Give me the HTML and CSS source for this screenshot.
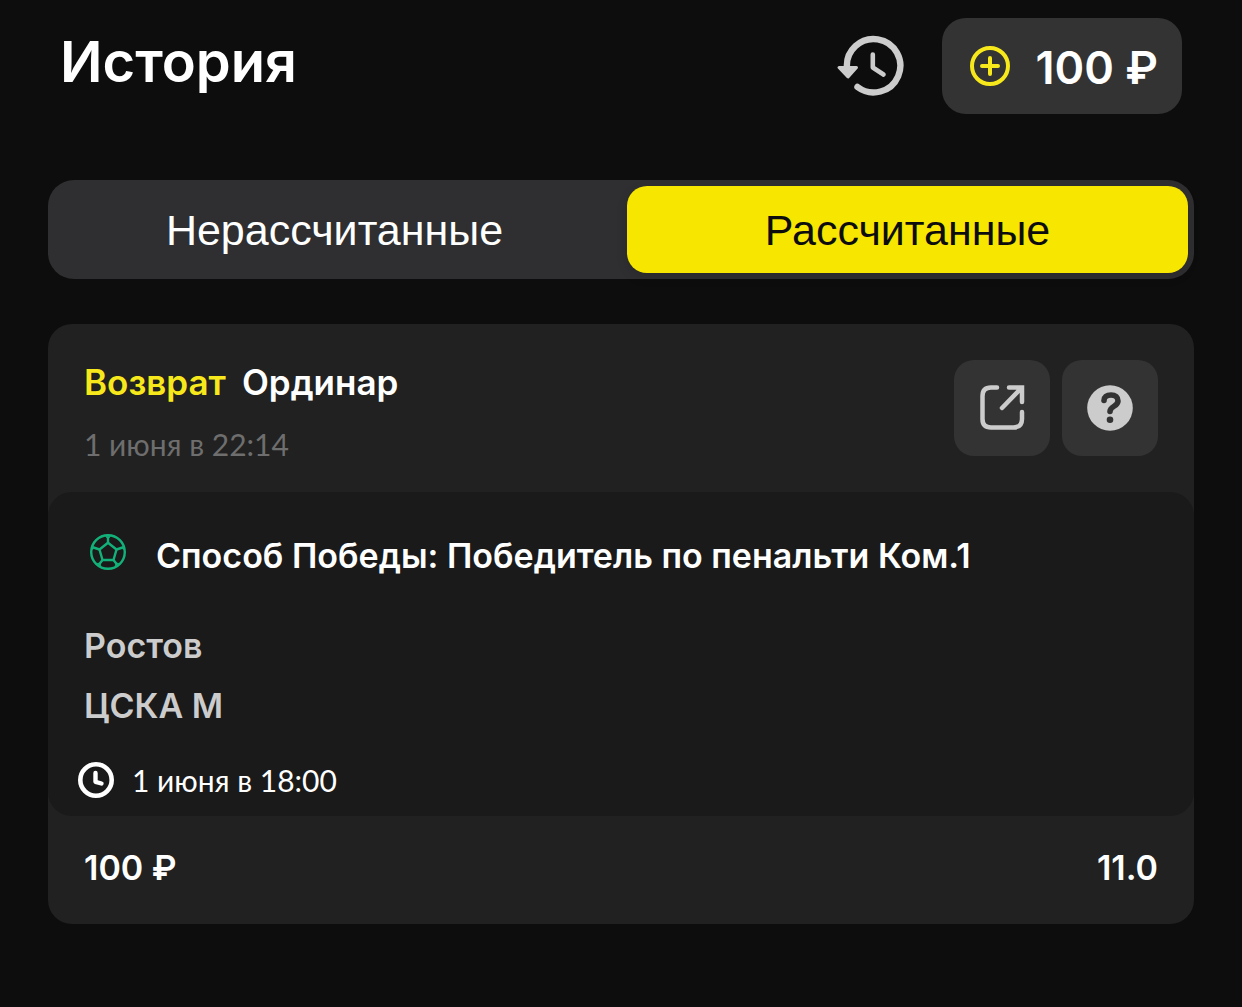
FILE: index.html
```html
<!DOCTYPE html>
<html lang="ru">
<head>
<meta charset="utf-8">
<meta name="viewport" content="width=device-width, initial-scale=1">
<title>История</title>
<link rel="stylesheet" href="styles.css">
</head>
<body>
<header class="topbar">
  <h1 class="title">История</h1>
  <button class="history" type="button" aria-label="История операций">
    <svg width="68" height="64" viewBox="0 0 68 64" fill="none" stroke="#ccc" stroke-linecap="round" stroke-linejoin="round">
      <path d="M11 34A26.700 26.700 0 1 1 21.500 53" stroke-width="6.400"/>
      <path d="M3 33.500H20.500L12 43Z" fill="#ccc" stroke-width="3"/>
      <path d="M36.800 20.500V33.500L47.500 40.500" stroke-width="4.600"/>
    </svg>
  </button>
  <button class="balance" type="button">
    <svg width="40" height="40" viewBox="0 0 40 40" fill="none" stroke="#f7e81c" stroke-linecap="round">
      <circle cx="20" cy="20" r="18" stroke-width="4"/>
      <path d="M20 12V28M12 20H28" stroke-width="4"/>
    </svg>
    <span class="amount">100 ₽</span>
  </button>
</header>
<main>
  <div class="segments" role="tablist">
    <button class="segment" type="button" role="tab" aria-selected="false">Нерассчитанные</button>
    <button class="segment segment-active" type="button" role="tab" aria-selected="true">Рассчитанные</button>
  </div>
  <article class="bet">
    <header class="bet-head">
      <div class="bet-info">
        <h2 class="bet-title"><span class="status">Возврат</span><span>Ординар</span></h2>
        <time class="placed">1 июня в 22:14</time>
      </div>
      <div class="actions">
        <button class="action" type="button" aria-label="Поделиться">
          <svg width="48" height="48" viewBox="0 0 48 48" fill="none" stroke="#ccc" stroke-width="4.500" stroke-linecap="round">
            <path d="M19 3.500H13Q4.500 3.500 4.500 12V35Q4.500 43.500 13 43.500H35.500Q44 43.500 44 35V28"/>
            <path d="M31 3.500H44V18M43 4.500L24 24"/>
          </svg>
        </button>
        <button class="action" type="button" aria-label="Помощь">
          <svg width="48" height="48" viewBox="0 0 48 48" fill="none">
            <circle cx="24" cy="24" r="22.800" fill="#ccc"/>
            <path d="M18 16.500C18 13 20.500 11 25 11C29.500 11 32 13.500 32 17C32 22.500 24 22 24 27.500" stroke="#333" stroke-width="5.600" stroke-linecap="round"/>
            <circle cx="24" cy="35.800" r="3.300" fill="#333"/>
          </svg>
        </button>
      </div>
    </header>
    <section class="event">
      <h3 class="outcome">
        <svg class="ball" width="36" height="36" viewBox="0 0 36 36" fill="none" stroke="#13b17a" stroke-width="2.400" stroke-linejoin="round">
          <circle cx="18" cy="18" r="16.800"/>
          <path d="M18 8.800L26.500 15.500L23.500 26H12.500L9.500 15.500Z"/>
          <path d="M18 8.800V3M26.500 15.500L32.500 13.500M23.500 26L27 30.500M12.500 26L9 30.500M9.500 15.500L3.500 13.500"/>
          <path d="M15.500 2.500H20.500L18 5ZM33.500 11L34.500 16L31.500 14ZM29 29.500L25 32.500L26 29ZM7 29.500L11 32.500L10 29ZM2.500 11L1.500 16L4.500 14Z" fill="#13b17a" stroke-width="0.600"/>
        </svg>
        <span>Способ Победы: Победитель по пенальти Ком.1</span>
      </h3>
      <div class="teams">
        <div>Ростов</div>
        <div>ЦСКА М</div>
      </div>
      <div class="start">
        <svg width="36" height="36" viewBox="0 0 36 36" fill="none" stroke="#fff" stroke-linecap="round" stroke-linejoin="round">
          <circle cx="18" cy="18" r="15.700" stroke-width="4.600"/>
          <path d="M17.500 11V19.800L23.500 21.500" stroke-width="4.400"/>
        </svg>
        <time>1 июня в 18:00</time>
      </div>
    </section>
    <footer class="bet-foot"><span>100 ₽</span><span>11.0</span></footer>
  </article>
</main>
</body>
</html>
```
FILE: styles.css
```css
* { box-sizing: border-box; }
body {
  margin: 0;
  padding: 18px 48px 84px;
  background: #0d0d0d;
  color: #fff;
  font-family: Inter, "Noto Sans", sans-serif;
}
h1, h2, h3 { margin: 0; font-weight: 600; }
button { border: 0; padding: 0; margin: 0; background: none; color: inherit; font: inherit; }
svg { display: block; flex: none; }

.topbar { display: flex; align-items: flex-start; padding: 0 12px; }
.title { flex: 1; font-size: 56px; line-height: 88px; }
.history { display: flex; align-items: center; height: 96px; margin-right: 38px; }
.balance {
  display: flex;
  align-items: center;
  justify-content: space-between;
  gap: 16px;
  min-width: 240px;
  height: 96px;
  padding: 0 24px 0 28px;
  border-radius: 24px;
  background: #333;
  font-size: 45px;
  font-weight: 600;
  line-height: 60px;
  white-space: nowrap;
}
.amount { padding-top: 4px; }

.segments {
  display: grid;
  grid-template-columns: 1fr 1fr;
  gap: 12px;
  margin-top: 66px;
  padding: 6px;
  border-radius: 26px;
  background: #2f2f31;
}
.segment {
  height: 87px;
  padding-top: 2px;
  border-radius: 20px;
  font-family: "Liberation Sans", sans-serif;
  font-size: 43px;
}
.segment-active { background: #f7e600; color: #0d0d0d; box-shadow: 0 4px 12px rgba(0, 0, 0, 0.12); }

.bet { margin-top: 45px; border-radius: 24px; background: #212121; font-size: 34px; font-weight: 600; }
.bet-head { display: flex; justify-content: space-between; padding: 36px 36px 28px; }
.bet-info { display: flex; flex-direction: column; gap: 20px; }
.bet-title { display: flex; gap: 16px; font-size: 35px; line-height: 44px; }
.status { color: #f7e81c; }
.placed { color: #6e6e6e; font: 400 30px/40px Lato, sans-serif; }
.actions { display: flex; gap: 12px; }
.action {
  display: flex;
  align-items: center;
  justify-content: center;
  width: 96px;
  height: 96px;
  border-radius: 20px;
  background: #333;
}

.event { padding: 36px 36px 18px; border-radius: 24px; background: #1a1a1a; }
.outcome { display: flex; gap: 30px; padding-left: 6px; font-size: 34px; line-height: 56px; }
.ball { margin-top: 6px; }
.teams { margin-top: 32px; color: #ccc; line-height: 60px; }
.start {
  display: flex;
  align-items: center;
  gap: 18px;
  margin: 26px 0 0 -6px;
  font: 400 30px/36px Lato, sans-serif;
}
.bet-foot { display: flex; justify-content: space-between; padding: 36px 36px 40px; line-height: 32px; }
```
